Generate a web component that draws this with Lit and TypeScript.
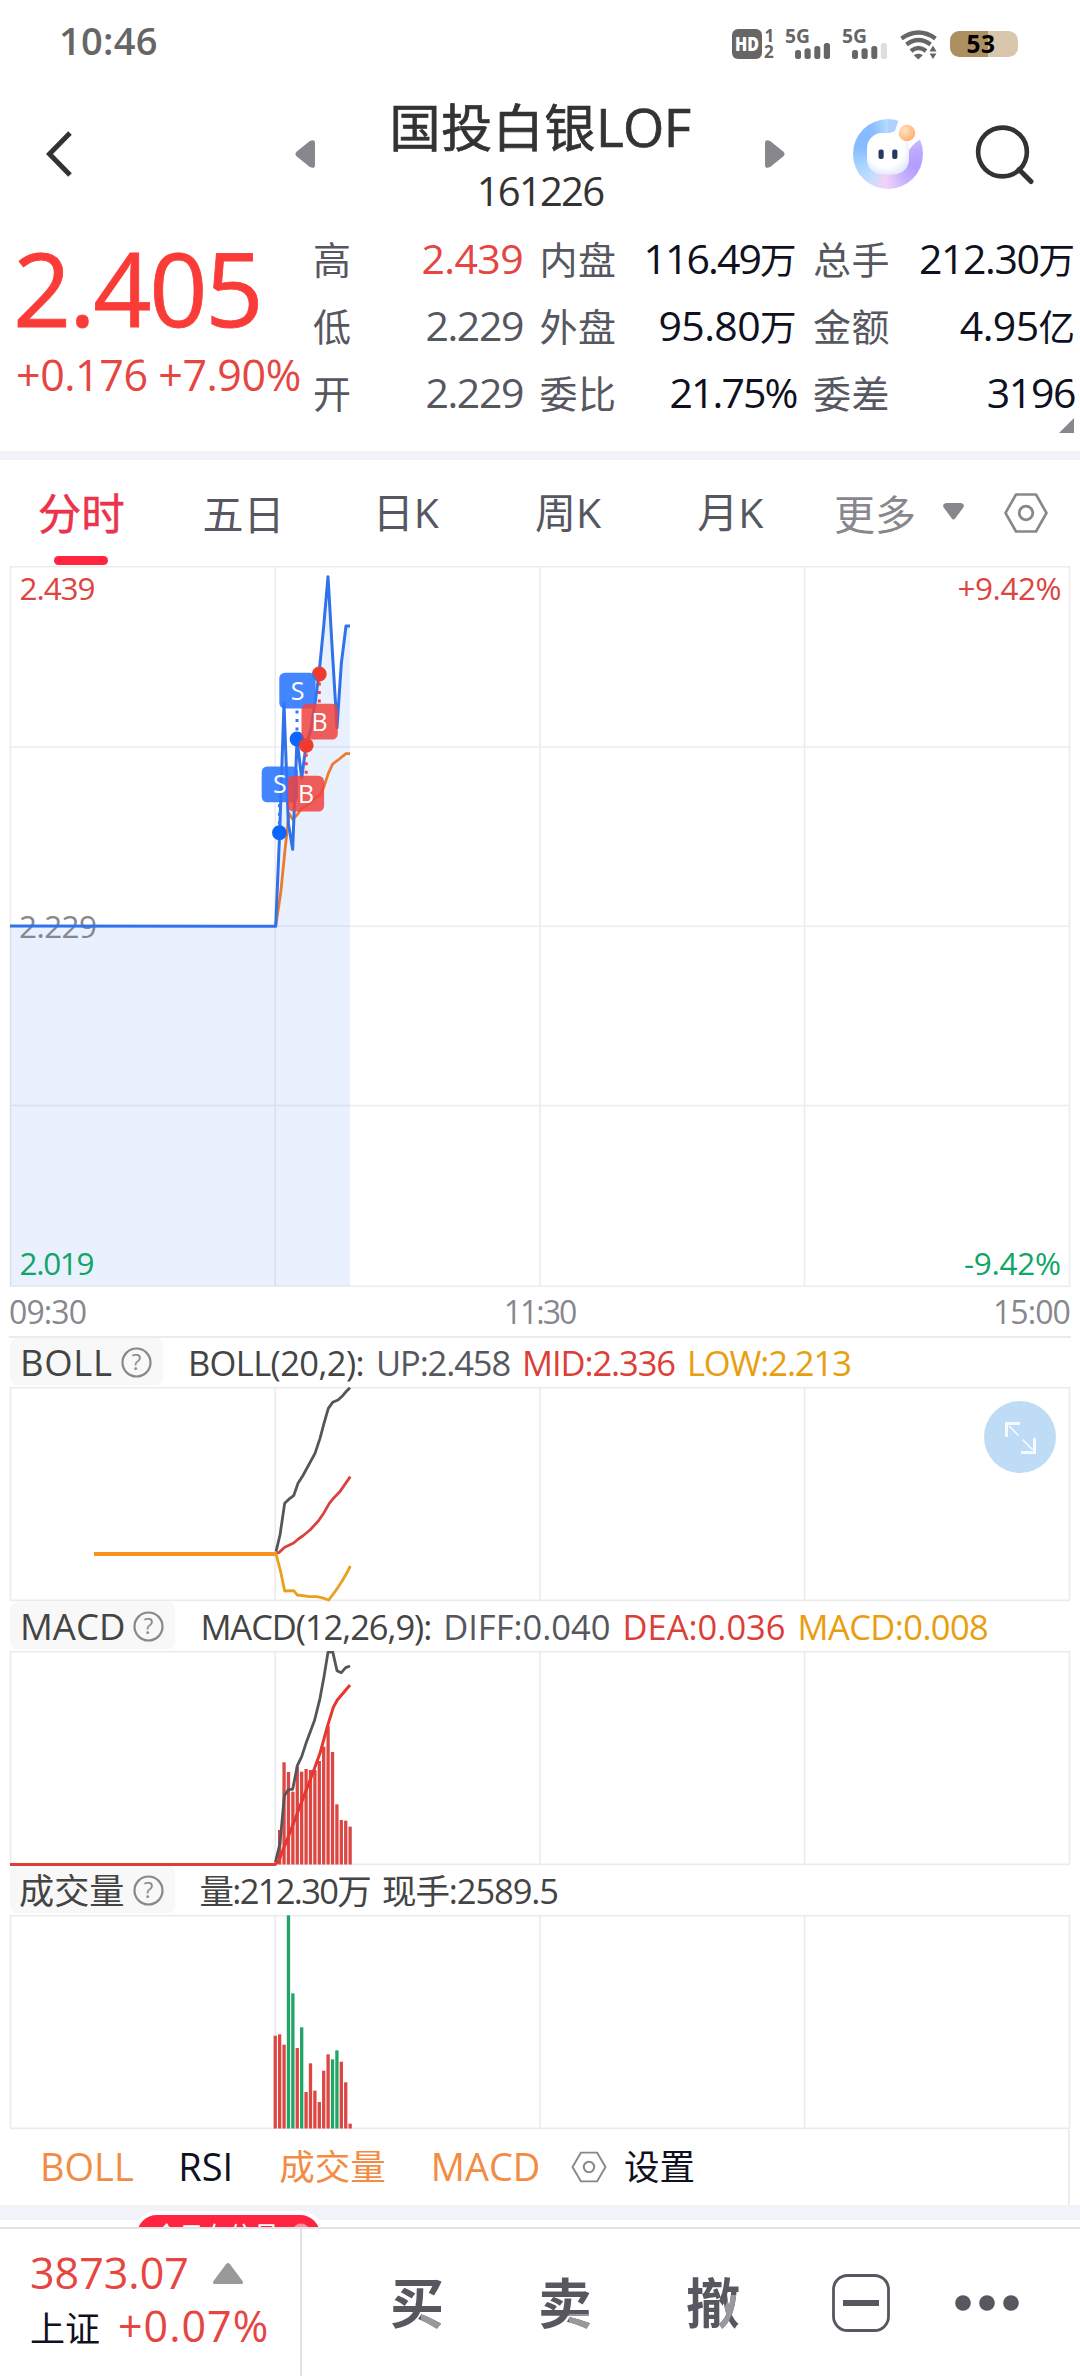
import { LitElement, html, css, svg } from "lit";
import { customElement, property } from "lit/decorators.js";
import { classMap } from "lit/directives/class-map.js";

type Pt = [number, number];
const line = (pts: Pt[]) => pts.map((p) => p.join(",")).join(" ");

/* Series points are held in thirds of a pixel from a local origin. */
const place = (ox: number, oy: number, pts: Pt[]): Pt[] =>
  pts.map(([x, y]) => [+(ox + x / 3).toFixed(2), +(oy + y / 3).toFixed(2)]);

const PRICE: Pt[] = [
  [10, 360],
  ...place(250, -6, [
    [77, 1099], [89, 818], [102, 430], [115, 790], [128, 868], [141, 537], [155, 655], [168, 556],
    [182, 510], [195, 430], [207, 342], [221, 200], [234, 50], [248, 290], [261, 503], [274, 310],
    [288, 198], [300, 198],
  ]),
];
const AVERAGE = place(250, -6, [
  [77, 1099], [92, 1000], [105, 870], [117, 760], [128, 778], [141, 765], [155, 745], [170, 738],
  [195, 715], [210, 705], [222, 680], [235, 640], [248, 612], [268, 597], [288, 581], [300, 581],
]);
const BOLL_UP = place(240, -17, [
  [108, 545], [120, 495], [134, 400], [150, 385], [161, 377], [174, 340], [188, 318], [225, 250],
  [240, 205], [252, 160], [265, 115], [278, 97], [294, 90], [308, 77], [320, 63], [330, 53],
]);
const BOLL_MID = place(240, -17, [
  [108, 550], [118, 547], [134, 532], [161, 519], [175, 507], [188, 498], [210, 480], [235, 453],
  [252, 428], [268, 400], [282, 383], [298, 367], [331, 320],
]);
const BOLL_LOW = place(240, -17, [
  [108, 552], [122, 605], [134, 663], [161, 662], [172, 675], [210, 680], [230, 680], [245, 683],
  [266, 690], [285, 665], [305, 635], [320, 610], [331, 588],
]);
const DIFF = place(240, -31, [
  [106, 728], [120, 670], [133, 527], [146, 508], [158, 508], [172, 437], [185, 410], [198, 370],
  [224, 300], [240, 235], [252, 170], [264, 97], [278, 95], [291, 152], [304, 158], [317, 143], [330, 138],
]);
const DEA = place(240, -31, [
  [106, 734], [118, 718], [145, 650], [218, 460], [240, 400], [262, 320], [280, 262], [292, 240], [330, 195],
]);
const MACD_TOPS = [630, 427, 456, 515, 440, 455, 447, 450, 450, 423, 380, 318, 396, 553, 600, 602, 620];
const VOLUME: [number, boolean][] = [
  [467, true], [463, true], [494, true], [106, false], [340, false], [504, true], [442, false],
  [636, true], [550, true], [632, true], [666, true], [572, true], [523, true], [538, false],
  [511, false], [545, true], [607, true], [731, true],
];

/* Trades: sells carry their badge above the dot, buys below it. */
const MARKS = [
  { kind: "S", x: 279.4, y: 266.7, left: 261.7, top: 200.5 },
  { kind: "S", x: 297, y: 173, left: 279.3, top: 106.8 },
  { kind: "B", x: 306.2, y: 179.3, left: 287.8, top: 209.8 },
  { kind: "B", x: 319.3, y: 108, left: 301.5, top: 137.8 },
];

const base = css`
  :host {
    display: block;
    font-family: "Open Sans", "Noto Sans CJK SC", sans-serif;
    color: #333;
  }
  svg { display: block; flex: none; }
  svg text { font-family: "Open Sans", "Noto Sans CJK SC", sans-serif; }
`;

@customElement("status-bar")
class StatusBar extends LitElement {
  static styles = [base, css`
    .bar { display: flex; justify-content: space-between; height: 82px; padding: 0 60px 0 59px; box-sizing: border-box; }
    .clock { font-size: 38px; line-height: 81px; font-weight: 600; color: #666; letter-spacing: 0.3px; }
    .g { fill: #666; }
    .off { fill: #dedede; }
    .cut { fill: #fff; font-weight: 800; }
    .b { font-weight: 700; }
    .arc { fill: none; stroke: #666; stroke-width: 4.4; }
  `];
  render() {
    const bars = (x: number, last: boolean) => svg`
      <rect class="g" x=${x} y="50" width="6" height="9" rx="2.5"/>
      <rect class="g" x=${x + 9.5} y="48.3" width="6.2" height="10.7" rx="2.5"/>
      <rect class="g" x=${x + 19.3} y="46" width="6" height="13" rx="2.5"/>
      <rect class=${last ? "g" : "off"} x=${x + 28.8} y="43" width="6.2" height="16" rx="2.5"/>`;
    return html`<div class="bar">
      <span class="clock">10:46</span>
      <svg width="290" height="82" viewBox="730 0 290 82">
        <rect class="g" x="732" y="29" width="30" height="30" rx="6"/>
        <text class="cut" x="735" y="51" font-size="19" textLength="24" lengthAdjust="spacingAndGlyphs">HD</text>
        <text class="g b" x="764.5" y="41.5" font-size="17">1</text>
        <text class="g b" x="764" y="58.3" font-size="17">2</text>
        <text class="g b" x="785" y="43" font-size="19.5" textLength="25" lengthAdjust="spacingAndGlyphs">5G</text>
        ${bars(795, true)}
        <text class="g b" x="842" y="43" font-size="19.5" textLength="25" lengthAdjust="spacingAndGlyphs">5G</text>
        ${bars(852, false)}
        <path class="arc" d="M901.5 38.5Q918.5 26.5 935.5 38.5"/>
        <path class="arc" d="M906.5 44.5Q918.5 35.5 930.5 44.5"/>
        <path class="arc" d="M911 51Q918.5 45 926 51"/>
        <path class="g" d="M913.8 55.2Q918.5 52.3 922.8 55.2L918.3 59.5ZM929.5 51.5L933 45.5L936.5 51.5ZM929.5 53.5L933 59L936.5 53.5Z"/>
        <clipPath id="cell"><rect x="950" y="31" width="68" height="26" rx="9.5"/></clipPath>
        <g clip-path="url(#cell)">
          <rect x="950" y="31" width="68" height="26" fill="#d8c7ad"/>
          <rect x="950" y="31" width="38" height="26" fill="#ad9060"/>
        </g>
        <text class="b" x="966.5" y="52.6" font-size="24.5" textLength="28.5">53</text>
      </svg>
    </div>`;
  }
}

@customElement("fund-header")
class FundHeader extends LitElement {
  static styles = [base, css`
    .head { display: flex; align-items: center; height: 143px; padding-left: 44px; }
    .left { margin-left: 221px; }
    .titles { width: 450px; height: 143px; text-align: center; }
    .name { margin-top: 15px; font-size: 51px; line-height: 60px; letter-spacing: 0.6px; white-space: nowrap; -webkit-text-stroke: 0.7px #333; }
    .latin { font-size: 53px; letter-spacing: -0.6px; }
    .code { margin-top: 10px; font-size: 40px; line-height: 48px; letter-spacing: -1.8px; }
    .face { position: relative; width: 70px; height: 70px; margin: 0 51px 0 68px; }
    .ring { width: 70px; height: 70px; border-radius: 50%;
      background: conic-gradient(#a8d4ff 0deg, #d0c4ff 55deg, #c0acff 80deg, #b49cff 115deg, #c6b0ff 145deg, #f4d3f6 185deg, #c5dcff 215deg, #a9d6ff 245deg, #86bcff 285deg, #88bbff 325deg, #b4dcff 360deg); }
    .mask { position: absolute; left: 0; top: 0; }
  `];
  render() {
    return html`<div class="head">
      <svg width="30" height="50" viewBox="0 0 30 50"><path d="M26 4L5.5 25L26 46" fill="none" stroke="#333" stroke-width="5"/></svg>
      <svg class="left" width="20" height="28" viewBox="0 0 20 28"><path d="M14.5 1.2Q20 -1.5 20 3V25Q20 29.5 14.5 26.8L1.8 16.5Q-1 14 1.8 11.5Z" fill="#88878e"/></svg>
      <div class="titles">
        <div class="name">国投白银<span class="latin">LOF</span></div>
        <div class="code">161226</div>
      </div>
      <svg width="20" height="28" viewBox="0 0 20 28"><path d="M5.5 1.2Q0 -1.5 0 3V25Q0 29.5 5.5 26.8L18.2 16.5Q21 14 18.2 11.5Z" fill="#88878e"/></svg>
      <div class="face">
        <div class="ring"></div>
        <svg class="mask" width="74" height="74" viewBox="0 0 74 74">
          <defs>
            <radialGradient id="skin" cx="45%" cy="40%" r="70%"><stop offset="0.6" stop-color="#fff"/><stop offset="1" stop-color="#d9e2fb"/></radialGradient>
            <radialGradient id="sun" cx="35%" cy="35%" r="70%"><stop offset="0" stop-color="#ffe2c8"/><stop offset="1" stop-color="#ffb06c"/></radialGradient>
          </defs>
          <path d="M46 0L42 12Q38 14 30 15L54 36Q57 26 68 20L74 0Z" fill="#fff"/>
          <rect x="14" y="14" width="42" height="41.5" rx="15" fill="url(#skin)"/>
          <circle cx="54" cy="14" r="8.2" fill="url(#sun)"/>
          <rect x="25.5" y="30.5" width="5.2" height="9.4" rx="2" fill="#243a63"/>
          <rect x="39.2" y="30.5" width="5.2" height="9.4" rx="2" fill="#243a63"/>
        </svg>
      </div>
      <svg width="62" height="62" viewBox="0 0 62 62"><circle cx="28.5" cy="29" r="24.4" fill="none" stroke="#333" stroke-width="4.6"/><path d="M45 46.5L57 58.5" stroke="#333" stroke-width="5" stroke-linecap="round"/></svg>
    </div>`;
  }
}

@customElement("quote-panel")
class QuotePanel extends LitElement {
  static styles = [base, css`
    .quote { position: relative; display: flex; height: 226px; border-bottom: 9px solid #f2f3f8; }
    .main { width: 313px; padding-top: 8px; box-sizing: border-box; white-space: nowrap; }
    .price { padding-left: 13px; font-size: 102px; line-height: 110px; letter-spacing: -2.4px; color: #fa3c39; -webkit-text-stroke: 0.8px #fa3c39; }
    .change { margin-top: 7px; padding-left: 16px; font-size: 43px; line-height: 50px; letter-spacing: -0.45px; color: #e64541; }
    .stats { display: grid; grid-template-columns: 210px 257px 262px; column-gap: 16.5px; grid-auto-rows: 66.8px; }
    .stat { display: flex; justify-content: space-between; align-items: baseline; font-size: 41px; line-height: 66.8px; white-space: nowrap; color: #0f1020; }
    .label { font-size: 38px; line-height: 66.8px; letter-spacing: 0.6px; color: #56575f; }
    .unit { font-size: 36.5px; letter-spacing: 0; }
    .grey { color: #56575f; }
    .red { color: #e64541; }
    .t1 { letter-spacing: -0.6px; }
    .t2 { letter-spacing: -1.4px; }
    .t3 { letter-spacing: -1.9px; }
    .more { position: absolute; right: 6px; bottom: 18px; }
  `];
  rows = [
    ["高", "2.439", "", "red t1"], ["内盘", "116.49", "万", "t3"], ["总手", "212.30", "万", "t2"],
    ["低", "2.229", "", "grey t2"], ["外盘", "95.80", "万", "t1"], ["金额", "4.95", "亿", "t1"],
    ["开", "2.229", "", "grey t2"], ["委比", "21.75%", "", "t3"], ["委差", "3196", "", "t2"],
  ];
  render() {
    return html`<div class="quote">
      <div class="main"><div class="price">2.405</div><div class="change">+0.176 +7.90%</div></div>
      <div class="stats">${this.rows.map(([l, v, u, c]) => html`<div class="stat">
        <span class="label">${l}</span><span class=${c}>${v}${u ? html`<span class="unit">${u}</span>` : ""}</span></div>`)}
      </div>
      <svg class="more" width="15" height="15" viewBox="0 0 15 15"><path d="M15 0V15H0Z" fill="#88878e"/></svg>
    </div>`;
  }
}

@customElement("period-tabs")
class PeriodTabs extends LitElement {
  static styles = [base, css`
    .tabs { display: flex; height: 106px; box-sizing: border-box; }
    .tab { width: 162.3px; padding-top: 34px; font-size: 41px; line-height: 40px; text-align: center; color: #56575f; white-space: nowrap; }
    .k { padding-top: 31.5px; }
    .on { font-size: 43.5px; color: #eb334b; -webkit-text-stroke: 0.5px #eb334b; }
    .mark { width: 54px; height: 9px; margin: 22px auto 0; border-radius: 4.5px; background: #ff2540; }
    .more { width: auto; margin-left: 22.5px; color: #88878e; }
    .caret { margin: 43px 0 0 27px; }
    .gear { margin: 32px 0 0 39px; }
  `];
  render() {
    return html`<div class="tabs">
      ${["分时", "五日", "日K", "周K", "月K"].map((t, i) => html`<div class=${classMap({ tab: true, on: i === 0, k: i > 1 })}>
        ${t}${i === 0 ? html`<div class="mark"></div>` : ""}</div>`)}
      <div class="tab more">更多</div>
      <svg class="caret" width="21" height="17" viewBox="0 0 21 17"><path d="M3 0H18Q22.5 1 20 5L12.5 15Q10.5 18 8.5 15L1 5Q-1.5 1 3 0Z" fill="#88878e"/></svg>
      <svg class="gear" width="46" height="42" viewBox="0 0 46 42"><path d="M13 2.5H33L43.5 21L33 39.5H13L2.5 21Z" fill="none" stroke="#88878e" stroke-width="2.6" stroke-linejoin="round"/><circle cx="23" cy="21" r="6.8" fill="none" stroke="#88878e" stroke-width="2.8"/></svg>
    </div>`;
  }
}

@customElement("intraday-chart")
class IntradayChart extends LitElement {
  static styles = [base, css`
    .grid { fill: none; stroke: #6b6b78; stroke-opacity: 0.13; stroke-width: 1.6; }
    .area { fill: #e9f1fe; }
    .price { fill: none; stroke: #2f72ea; stroke-width: 3; stroke-linejoin: round; }
    .avg { fill: none; stroke: #ee7a30; stroke-width: 2.8; stroke-linejoin: round; }
    .S { fill: #2f78ff; fill-opacity: 0.9; }
    .B { fill: #ee4340; fill-opacity: 0.85; }
    .dotS { fill: #0f66ff; }
    .dotB { fill: #f03a30; }
    .link { stroke-width: 3; stroke-dasharray: 3 5.5; }
    .linkS { stroke: #2f78ff; }
    .linkB { stroke: #ee4340; }
    .letter { fill: #fff; font-size: 25px; text-anchor: middle; }
    .tag { font-size: 31.5px; }
    .red { fill: #dd4540; }
    .green { fill: #12a566; }
    .grey { fill: #88878e; }
    .axis { display: flex; justify-content: space-between; height: 48px; padding: 1px 10px 0 9px; font-size: 32px; line-height: 48px; letter-spacing: -0.9px; color: #88878e; box-sizing: border-box; }
    .axis span:nth-child(2) { letter-spacing: -2px; }
    .rule { height: 2px; margin: 1px 9px 0; background: #ebebed; }
  `];
  render() {
    return html`
      <svg width="1080" height="721" viewBox="0 0 1080 721">
        <polygon class="area" points="10,720 ${line(PRICE)} 350,720"/>
        <path class="grid" d="M10.5 0.8H1069.5V720.2H10.5ZM10.5 181H1069.5M10.5 360.2H1069.5M10.5 539.5H1069.5M275.2 0V720M540 0V720M804.5 0V720"/>
        <text class="tag grey" x="19" y="372" textLength="78">2.229</text>
        <polyline class="avg" points=${line(AVERAGE)}/>
        <polyline class="price" points=${line(PRICE)}/>
        ${MARKS.map((m) => svg`
          <line class="link link${m.kind}" x1=${m.x} x2=${m.x} y1=${m.y} y2=${m.kind === "S" ? m.top + 36 : m.top}/>
          <circle class="dot${m.kind}" cx=${m.x} cy=${m.y} r="7.4"/>`)}
        ${MARKS.map((m) => svg`
          <rect class=${m.kind} x=${m.left} y=${m.top} width="36.3" height="35.8" rx="5.5"/>
          <text class="letter" x=${m.left + 18.2} y=${m.top + 26.8}>${m.kind}</text>`)}
        <text class="tag red" x="19.5" y="34" textLength="76">2.439</text>
        <text class="tag red" x="957.5" y="34" textLength="104">+9.42%</text>
        <text class="tag green" x="19.5" y="708.5" textLength="75">2.019</text>
        <text class="tag green" x="964" y="708.5" textLength="97">-9.42%</text>
      </svg>
      <div class="axis"><span>09:30</span><span>11:30</span><span>15:00</span></div>
      <div class="rule"></div>`;
  }
}

@customElement("indicator-panel")
class IndicatorPanel extends LitElement {
  @property() name = "";
  @property({ attribute: false }) legend: [string, string][] = [];
  @property({ attribute: false }) plot: unknown = null;
  @property({ type: Boolean }) expandable = false;
  static styles = [base, css`
    .panel { position: relative; height: 264px; }
    .head { display: flex; height: 49px; padding-left: 10px; font-size: 34.5px; line-height: 49px; white-space: nowrap; color: #444; }
    .chip { display: flex; height: 47px; padding: 0 11px 0 10px; gap: 8px; border-radius: 7px; background: #f8f8f8; font-size: 36.5px; color: #444; }
    .spaced { letter-spacing: 0.7px; }
    .cjk { padding-left: 9px; font-size: 35.2px; }
    .help { margin-top: 9px; }
    .help text { font-size: 22px; fill: #88878e; text-anchor: middle; letter-spacing: 0; }
    .items { display: flex; gap: 12px; margin-left: 25px; letter-spacing: -1.1px; }
    .first { letter-spacing: -0.6px; }
    .tight { letter-spacing: -1.05px; }
    .tighter { letter-spacing: -1.7px; }
    .wide { letter-spacing: 0; }
    .grey { color: #56575f; }
    .red { color: #dc3f37; }
    .gold { color: #e99e10; }
    .grid { fill: none; stroke: #ebebed; stroke-width: 1.6; }
    .dark { fill: none; stroke: #55565a; stroke-width: 2.8; stroke-linejoin: round; }
    .mid { fill: none; stroke: #d8433d; stroke-width: 2.8; stroke-linejoin: round; }
    .dea { fill: none; stroke: #e8362f; stroke-width: 3; stroke-linejoin: round; }
    .low { fill: none; stroke: #e9a01c; stroke-width: 2.8; stroke-linejoin: round; }
    .flat { stroke: #f59220; stroke-width: 3.8; }
    .zero { stroke: #dc3f37; stroke-width: 3; }
    .up { fill: #dc4744; }
    .down { fill: #1fa565; }
    .expand { position: absolute; right: 24px; top: 63px; }
  `];
  render() {
    return html`<div class="panel">
      <div class="head">
        <div class=${classMap({ chip: true, spaced: this.name === "BOLL", cjk: this.name === "成交量" })}>${this.name}
          <svg class="help" width="31" height="31" viewBox="0 0 31 31"><circle cx="15.5" cy="15.5" r="14" fill="none" stroke="#88878e" stroke-width="2.2"/><text x="15.5" y="23.3">?</text></svg>
        </div>
        <div class="items">${this.legend.map(([t, c]) => html`<span class=${c}>${t}</span>`)}</div>
      </div>
      <svg width="1080" height="215" viewBox="0 0 1080 215">
        <path class="grid" d="M10.5 0.6H1069.5V213.4H10.5ZM275.2 0V213M540 0V213M804.5 0V213"/>
        ${this.plot}
      </svg>
      ${this.expandable ? html`<svg class="expand" width="72" height="72" viewBox="0 0 72 72"><circle cx="36" cy="36" r="36" fill="#bedcf6"/>
        <path d="M22.5 36V22.5H36M50.5 37V51.5H37" fill="none" stroke="#f4fafe" stroke-width="3"/><path d="M25 25L34.5 34.5M38.5 38.5L48.5 48.5" stroke="#f4fafe" stroke-width="1.6"/></svg>` : ""}
    </div>`;
  }
}

@customElement("indicator-bar")
class IndicatorBar extends LitElement {
  static styles = [base, css`
    .bar { display: flex; width: 1070px; height: 75px; padding-left: 40px; box-sizing: border-box; border-right: 2px solid #ebebed; font-size: 38px; line-height: 72px; white-space: nowrap; color: #0f1020; }
    .on { color: #f28c45; }
    .cjk { font-size: 35.5px; line-height: 73px; }
    .rsi { margin-left: 44.5px; }
    .vol { margin-left: 46px; }
    .macd { margin-left: 45px; }
    .hex { margin: 21px 16.5px 0 31px; }
    .foot { position: relative; height: 22px; overflow: hidden; }
    .band { height: 15px; background: #f2f3f8; }
    .pill { position: absolute; left: 133px; top: 6px; height: 44px; width: 191px; box-sizing: border-box; padding-left: 17px; border: 4px solid #fff; border-radius: 24px 24px 0 0; background: #ff2540; color: #fff; font-size: 25px; line-height: 40px; }
    .pill svg { position: absolute; left: 155px; top: 8px; }
  `];
  render() {
    return html`<div class="bar">
      <span class="on">BOLL</span><span class="rsi">RSI</span><span class="on cjk vol">成交量</span><span class="on macd">MACD</span>
      <svg class="hex" width="36" height="32" viewBox="0 0 36 32"><path d="M10 1.6H26L34.5 16L26 30.4H10L1.5 16Z" fill="none" stroke="#88878e" stroke-width="1.9" stroke-linejoin="round"/><circle cx="18" cy="16" r="5.2" fill="none" stroke="#88878e" stroke-width="2"/></svg>
      <span class="cjk">设置</span>
    </div>
    <div class="foot"><div class="band"></div>
      <div class="pill">今日有信号<svg width="18" height="18" viewBox="0 0 18 18"><circle cx="9" cy="9" r="8.5" fill="#ff8e9d"/></svg></div>
    </div>`;
  }
}

@customElement("trade-bar")
class TradeBar extends LitElement {
  static styles = [base, css`
    .bar { display: flex; height: 147px; border-top: 2px solid #e3e3e6; }
    .index { width: 300px; padding: 19px 0 0 30px; box-sizing: border-box; white-space: nowrap; }
    .line { display: flex; align-items: baseline; font-size: 43px; line-height: 50px; color: #e64541; }
    .second { margin-top: 3px; letter-spacing: 1px; }
    .name { margin-right: 18px; font-size: 35px; letter-spacing: 0; color: #0f1020; }
    .tri { margin: 15px 0 0 24px; align-self: flex-start; }
    .sep { width: 2px; margin-right: 41px; background: #e3e3e6; }
    .act { display: flex; align-items: center; justify-content: center; width: 148px; height: 148px; }
    .glyph { font-size: 54px; line-height: 60px; font-weight: 700; color: transparent; background-clip: text; -webkit-background-clip: text; background-repeat: no-repeat; }
    .tail { background-image: linear-gradient(#99999d, #99999d), linear-gradient(#56575f, #56575f); background-size: 24px 20px, 100% 100%; background-position: 31px 41px, 0 0; }
    .slash { background-image: linear-gradient(113deg, transparent 28%, #99999d 32%, #99999d 56%, transparent 60%), linear-gradient(#56575f, #56575f); background-size: 20px 38px, 100% 100%; background-position: 33px 22px, 0 0; }
    .last { width: 104px; }
  `];
  render() {
    return html`<div class="bar">
      <div class="index">
        <div class="line">3873.07<svg class="tri" width="30" height="21" viewBox="0 0 30 21"><path d="M13 1.2Q15 -1 17 1.2L29.5 18Q31 21 28 21H2Q-1 21 0.5 18Z" fill="#999"/></svg></div>
        <div class="line second"><span class="name">上证</span>+0.07%</div>
      </div>
      <div class="sep"></div>
      <div class="act"><span class="glyph tail">买</span></div>
      <div class="act"><span class="glyph tail">卖</span></div>
      <div class="act"><span class="glyph slash">撤</span></div>
      <div class="act"><svg width="58" height="58" viewBox="0 0 58 58"><rect x="1.5" y="1.5" width="55" height="55" rx="14" fill="none" stroke="#56575f" stroke-width="2.8"/><rect x="11" y="26" width="36" height="6" fill="#56575f"/></svg></div>
      <div class="act last"><svg width="64" height="16" viewBox="0 0 64 16"><g fill="#56575f"><circle cx="8" cy="8" r="7.8"/><circle cx="32" cy="8" r="7.8"/><circle cx="56" cy="8" r="7.8"/></g></svg></div>
    </div>`;
  }
}

@customElement("app-root")
class AppRoot extends LitElement {
  static styles = [base, css`
    .page { width: 1080px; height: 2376px; overflow: hidden; background: #fff; }
  `];
  render() {
    const boll = svg`
      <polyline class="dark" points=${line(BOLL_UP)}/>
      <polyline class="mid" points=${line(BOLL_MID)}/>
      <line class="flat" x1="94" y1="167" x2="277" y2="167"/>
      <polyline class="low" points=${line(BOLL_LOW)}/>`;
    const macd = svg`
      ${MACD_TOPS.map((t, i) => svg`<rect class="up" x=${278 + i * 4.405} y=${t / 3 - 31} width="3.3" height=${244.5 - t / 3}/>`)}
      <line class="zero" x1="10" y1="213.4" x2="276" y2="213.4"/>
      <polyline class="dark" points=${line(DIFF)}/>
      <polyline class="dea" points=${line(DEA)}/>`;
    const volume = VOLUME.map(([t, up], i) => svg`<rect class=${up ? "up" : "down"} x=${273.6 + i * 4.405} y=${t / 3 - 35} width="3.3" height=${248.5 - t / 3}/>`);
    return html`<div class="page">
      <status-bar></status-bar>
      <fund-header></fund-header>
      <quote-panel></quote-panel>
      <period-tabs></period-tabs>
      <intraday-chart></intraday-chart>
      <indicator-panel name="BOLL" expandable .plot=${boll}
        .legend=${[["BOLL(20,2):", "first"], ["UP:2.458", "grey"], ["MID:2.336", "red"], ["LOW:2.213", "gold"]]}></indicator-panel>
      <indicator-panel name="MACD" .plot=${macd}
        .legend=${[["MACD(12,26,9):", "tight"], ["DIFF:0.040", "grey wide"], ["DEA:0.036", "red wide"], ["MACD:0.008", "gold first"]]}></indicator-panel>
      <indicator-panel name="成交量" .plot=${volume}
        .legend=${[["量:212.30万", "tighter"], ["现手:2589.5", ""]]}></indicator-panel>
      <indicator-bar></indicator-bar>
      <trade-bar></trade-bar>
    </div>`;
  }
}
